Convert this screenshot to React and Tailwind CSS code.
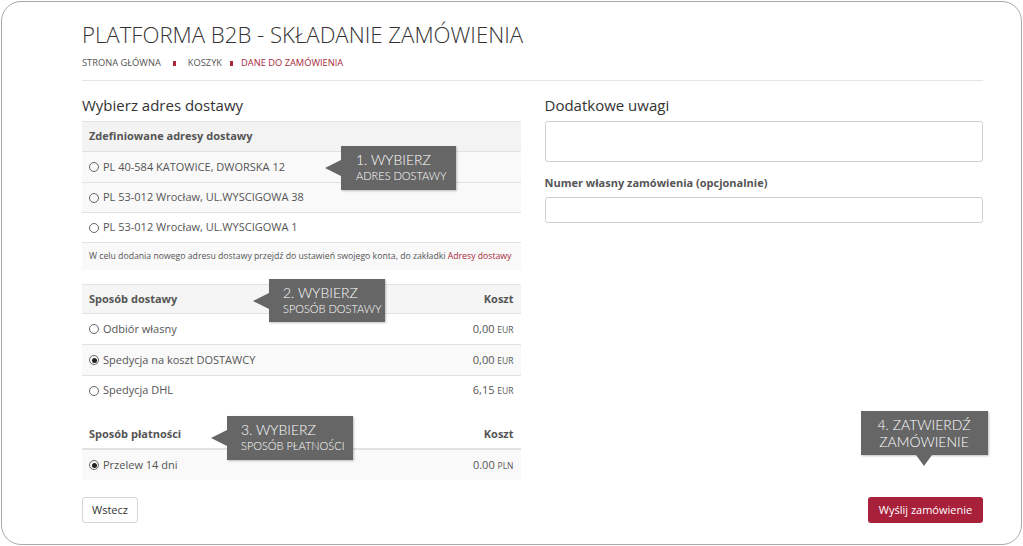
import React from "react";

const Radio = ({ checked }) => (
  <span className="inline-flex h-[10px] w-[10px] items-center justify-center rounded-full border border-[#666] mr-[4px] shrink-0">
    {checked && <span className="h-[5px] w-[5px] rounded-full bg-[#222]" />}
  </span>
);

const Tip = ({ className, arrow = "left", children }) => (
  <div
    className={`absolute bg-[#666] text-white font-['Lato','DejaVu_Sans',sans-serif] font-light shadow-[1px_1px_2px_rgba(0,0,0,0.25)] ${className}`}
  >
    {arrow === "left" && (
      <span className="absolute left-[-16px] top-1/2 -translate-y-1/2 h-0 w-0 border-y-[8px] border-y-transparent border-r-[16px] border-r-[#666]" />
    )}
    {arrow === "down" && (
      <span className="absolute bottom-[-11px] left-1/2 -translate-x-1/2 h-0 w-0 border-x-[8px] border-x-transparent border-t-[11px] border-t-[#666]" />
    )}
    {children}
  </div>
);

const Row = ({ bg, children, h = "h-[30px]" }) => (
  <div className={`flex items-center justify-between px-[7px] border-t border-[#e2e2e2] ${h} ${bg}`}>
    {children}
  </div>
);

const Cost = ({ v, c }) => (
  <span className="text-[11px] text-[#555]">
    {v} <span className="text-[8.5px] uppercase">{c}</span>
  </span>
);

export default function App() {
  return (
    <div className="w-[1023px] h-[546px] bg-white p-[1px] font-['Open_Sans','Liberation_Sans',sans-serif] text-[#555]">
      <div className="h-[544px] rounded-[20px] border border-[#a9a9a9] pt-[17px] pl-[80px] pr-[38px]">
        <h1 className="text-[22.2px] leading-[32px] font-light text-[#333]">
          PLATFORMA B2B - SKŁADANIE ZAMÓWIENIA
        </h1>
        <div className="mt-[6px] flex items-center text-[9.3px] leading-[12px] uppercase text-[#555]">
          <span>Strona główna</span>
          <span className="mx-[12px] h-[5px] w-[3px] bg-[#a8283a]" />
          <span>Koszyk</span>
          <span className="mx-[8px] h-[5px] w-[3px] bg-[#a8283a]" />
          <span className="text-[#a8283a]">Dane do zamówienia</span>
        </div>
        <div className="mt-[11px] border-t border-[#e5e5e5]" />

        <div className="grid grid-cols-2 gap-6 mt-[14px]">
          {/* left */}
          <div className="relative">
            <h2 className="text-[15px] leading-[20px] text-[#333] mb-[6px]">Wybierz adres dostawy</h2>
            <div className="text-[11px]">
              <Row bg="bg-[#f3f3f3]">
                <span className="font-bold">Zdefiniowane adresy dostawy</span>
              </Row>
              <Row bg="bg-[#f9f9f9]" h="h-[31px]">
                <span className="flex items-center"><Radio />PL 40-584 KATOWICE, DWORSKA 12</span>
              </Row>
              <Row bg="bg-[#f9f9f9]">
                <span className="flex items-center"><Radio />PL 53-012 Wrocław, UL.WYSCIGOWA 38</span>
              </Row>
              <Row bg="bg-white">
                <span className="flex items-center"><Radio />PL 53-012 Wrocław, UL.WYSCIGOWA 1</span>
              </Row>
              <Row bg="bg-[#f9f9f9]" h="h-[28px]">
                <span className="text-[8.7px] whitespace-nowrap">
                  W celu dodania nowego adresu dostawy przejdź do ustawień swojego konta, do zakładki{" "}
                  <span className="text-[#a8283a]">Adresy dostawy</span>
                </span>
              </Row>
            </div>

            <div className="mt-[14px] text-[11px]">
              <Row bg="bg-[#f5f5f5]" h="h-[29px]">
                <span className="font-bold">Sposób dostawy</span>
                <span className="font-bold">Koszt</span>
              </Row>
              <Row bg="bg-white" h="h-[31px]">
                <span className="flex items-center"><Radio />Odbiór własny</span>
                <Cost v="0,00" c="EUR" />
              </Row>
              <Row bg="bg-[#f9f9f9]" h="h-[31px]">
                <span className="flex items-center"><Radio checked />Spedycja na koszt DOSTAWCY</span>
                <Cost v="0,00" c="EUR" />
              </Row>
              <Row bg="bg-white" h="h-[30px]">
                <span className="flex items-center"><Radio />Spedycja DHL</span>
                <Cost v="6,15" c="EUR" />
              </Row>
            </div>

            <div className="mt-[16px] text-[11px]">
              <div className="flex items-center justify-between px-[7px] h-[29px] border-b-2 border-[#e2e2e2]">
                <span className="font-bold">Sposób płatności</span>
                <span className="font-bold">Koszt</span>
              </div>
              <div className="flex items-center justify-between px-[7px] h-[30px] bg-[#f9f9f9]">
                <span className="flex items-center"><Radio checked />Przelew 14 dni</span>
                <Cost v="0.00" c="PLN" />
              </div>
            </div>

            <button className="mt-[17px] h-[26px] w-[56px] rounded-[3px] border border-[#d5d5d5] bg-white text-[11px] text-[#333]">
              Wstecz
            </button>

            <Tip className="left-[259px] top-[51px] w-[115px] h-[44px] pl-[15px] pt-[5px]">
              <div className="text-[14px] leading-[18px]">1. WYBIERZ</div>
              <div className="text-[11px] leading-[14px]">ADRES DOSTAWY</div>
            </Tip>
            <Tip className="left-[187px] top-[184px] w-[116px] h-[43px] pl-[14px] pt-[5px]">
              <div className="text-[14px] leading-[18px]">2. WYBIERZ</div>
              <div className="text-[11px] leading-[14px]">SPOSÓB DOSTAWY</div>
            </Tip>
            <Tip className="left-[145px] top-[321px] w-[126px] h-[44px] pl-[14px] pt-[5px]">
              <div className="text-[14px] leading-[18px]">3. WYBIERZ</div>
              <div className="text-[11px] leading-[14px]">SPOSÓB PŁATNOŚCI</div>
            </Tip>
          </div>

          {/* right */}
          <div className="relative flex flex-col">
            <h2 className="text-[15px] leading-[20px] text-[#333] mb-[6px]">Dodatkowe uwagi</h2>
            <div className="h-[41px] rounded-[3px] border border-[#cfcfcf] bg-white" />
            <div className="mt-[14px] text-[11px] leading-[14px] font-bold">Numer własny zamówienia (opcjonalnie)</div>
            <div className="mt-[7px] h-[26px] rounded-[3px] border border-[#cfcfcf] bg-white" />
            <div className="mt-auto flex justify-end">
              <button className="h-[26px] w-[115px] rounded-[3px] bg-[#a8203a] text-[11px] font-medium text-white">
                Wyślij zamówienie
              </button>
            </div>
            <Tip
              arrow="down"
              className="left-[316px] top-[316px] w-[127px] h-[44px] flex flex-col items-center justify-center"
            >
              <div className="text-[14px] leading-[17px]">4. ZATWIERDŹ</div>
              <div className="text-[14px] leading-[17px]">ZAMÓWIENIE</div>
            </Tip>
          </div>
        </div>
      </div>
    </div>
  );
}
